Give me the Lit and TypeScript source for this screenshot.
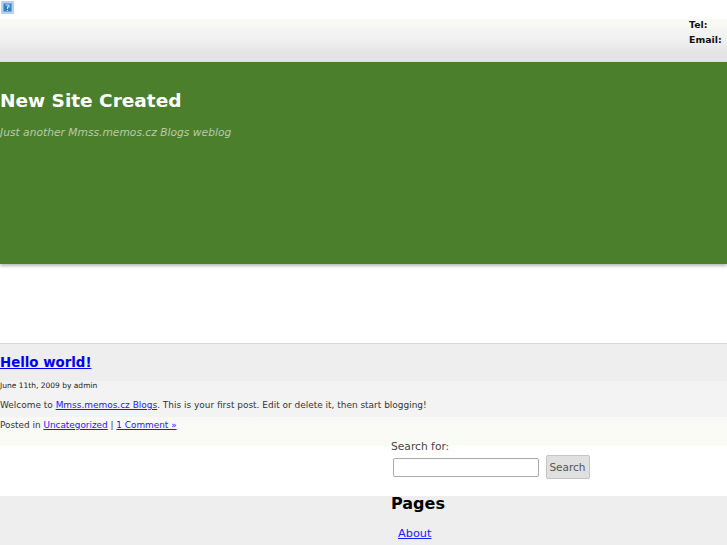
import { LitElement, html, css } from "lit";
import { customElement } from "lit/decorators.js";

@customElement("app-root")
export class AppRoot extends LitElement {
  static styles = css`
    :host {
      display: block;
      height: 545px;
      overflow: hidden;
      background: #fff;
      font-family: "DejaVu Sans", sans-serif;
      color: #333;
    }
    a { color: #00e; }
    .small a { color: #1a1aff; }
    .icon-row { height: 19px; padding: 1px 0 0 1px; box-sizing: border-box; }
    .icon { display: block; width: 13px; height: 13px; }
    .top {
      height: 43px;
      display: flex;
      justify-content: flex-end;
      background: linear-gradient(#fbfbf6 0, #f8f8f4 6px, #f3f3f2 12px, #f1f1f1 20px, #ebebef 27px, #e5e5e6 32px, #e2e2e2 43px);
    }
    .contact {
      width: 38px;
      margin-top: -2px;
      font-size: 9.4px;
      font-weight: bold;
      line-height: 15px;
      color: #111;
    }
    .banner {
      height: 202px;
      background: #4c7f2c;
      box-shadow: 0 2px 3px rgba(0,0,0,.28);
      padding-top: 28px;
      box-sizing: border-box;
    }
    .banner h1 {
      margin: 0;
      font-size: 18.5px;
      line-height: 22px;
      font-weight: bold;
      color: #fff;
    }
    .banner p {
      margin: 13px 0 0;
      font-size: 10.7px;
      line-height: 16px;
      font-style: italic;
      color: #b9c9ae;
    }
    .gap { height: 79px; border-bottom: 1px solid #d8d8d8; }
    .stack { display: grid; }
    .bands, .side { grid-area: 1 / 1; }
    .title {
      height: 37px;
      background: #eee;
      padding-top: 9px;
      box-sizing: border-box;
      font-size: 13.35px;
      line-height: 20px;
      font-weight: bold;
    }
    .body {
      height: 36px;
      background: #f3f3f3;
      font-size: 8.96px;
      color: #333;
    }
    .date { font-size: 7.5px; line-height: 10px; height: 15px; color: #222; }
    .text { line-height: 14px; padding-top: 2px; }
    .meta {
      height: 29px;
      background: linear-gradient(#f8f8f5, #fbfbf6);
      font-size: 8.9px;
      line-height: 14px;
      padding-top: 1px;
      box-sizing: border-box;
    }
    .spacer { height: 50px; }
    .rest { height: 60px; background: #eee; }
    .side { padding: 95px 0 0 391px; }
    .label { font-size: 10.7px; line-height: 15px; color: #444; }
    .form { display: flex; gap: 7px; margin: 1px 0 0 1.5px; align-items: center; }
    .form input {
      width: 146px;
      height: 19px;
      box-sizing: border-box;
      border: 1px solid #aaa;
      border-radius: 2px;
      background: #fff;
      padding: 0;
    }
    .form button {
      width: 44px;
      height: 24px;
      padding: 0;
      box-sizing: border-box;
      border: 1px solid #c4c4c4;
      border-radius: 2px;
      background: #e0e0e0;
      font-family: inherit;
      font-size: 10.5px;
      color: #555;
    }
    h2 {
      margin: 15px 0 0;
      font-size: 16px;
      line-height: 20px;
      color: #000;
    }
    .link { margin: 12px 0 0 7px; font-size: 11.3px; line-height: 15px; }
  `;

  render() {
    return html`
      <div class="icon-row">
        <svg class="icon" viewBox="0 0 13 13">
          <rect width="13" height="13" rx="1" fill="#b9cfe8"/>
          <rect x="2.5" y="2.5" width="8" height="8" fill="#2f7fc4"/>
          <path d="M4.5 3.5h4v3H7v1.5H6V5.5h1.5V4.5h-3zM6 9h1v1H6z" fill="#dce9f6"/>
        </svg>
      </div>
      <div class="top">
        <div class="contact"><div>Tel:</div><div>Email:</div></div>
      </div>
      <div class="banner">
        <h1>New Site Created</h1>
        <p>Just another Mmss.memos.cz Blogs weblog</p>
      </div>
      <div class="gap"></div>
      <div class="stack">
        <div class="bands">
          <div class="title"><a href="#">Hello world!</a></div>
          <div class="body small">
            <div class="date">June 11th, 2009 by admin</div>
            <div class="text">Welcome to <a href="#">Mmss.memos.cz Blogs</a>. This is your first post. Edit or delete it, then start blogging!</div>
          </div>
          <div class="meta small">Posted in <a href="#">Uncategorized</a> | <a href="#">1 Comment »</a></div>
          <div class="spacer"></div>
          <div class="rest"></div>
        </div>
        <div class="side small">
          <div class="label">Search for:</div>
          <div class="form"><input type="text" /><button>Search</button></div>
          <h2>Pages</h2>
          <div class="link"><a href="#">About</a></div>
        </div>
      </div>
    `;
  }
}
